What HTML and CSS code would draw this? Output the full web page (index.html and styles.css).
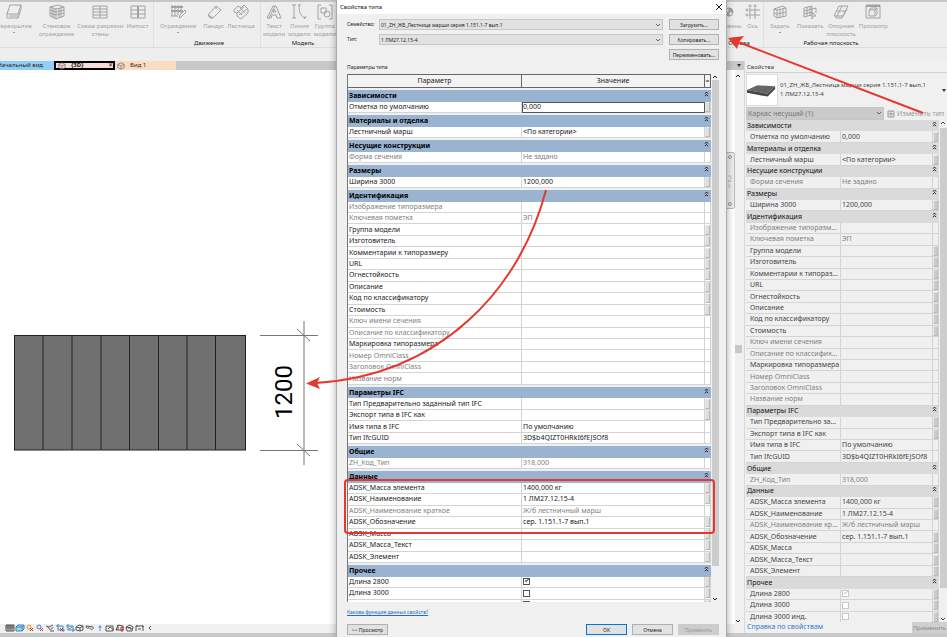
FILE: index.html
```html
<!DOCTYPE html>
<html lang="ru">
<head>
    <meta charset="UTF-8">
    <meta name="viewport" content="width=device-width, initial-scale=1.0">
    <title>Свойства типа</title>
    <link rel="stylesheet" href="styles.css">
</head>
<body>
    <svg class="symbols" aria-hidden="true">
        <symbol id="collapse" viewBox="0 0 5 6"><path d="M1 2.7L2.5 1L4 2.7M1 5.2L2.5 3.5L4 5.2" /></symbol>
        <symbol id="up" viewBox="0 0 6 6"><path d="M1 4L3 2L5 4" /></symbol>
        <symbol id="down" viewBox="0 0 6 6"><path d="M1 2L3 4L5 2" /></symbol>
        <symbol id="cube" viewBox="0 0 10 10"><path d="M1 3L5 1L9 3V7L5 9L1 7ZM1 3L5 5L9 3M5 5V9" /></symbol>
    </svg>

    <div class="app">
        <header class="ribbon">
            <section class="panel build">
                <div class="tools">
                    <button class="tool drop"><svg viewBox="0 0 16 16"><path d="M4 1H15L12 10H1ZM1 10V14H12V10M12 14L15 5V1M3 12H11" /></svg>Перекрытие</button>
                    <button class="tool"><svg viewBox="0 0 16 16"><path d="M1 3L9 1L15 3V12L7 15L1 12ZM1 3L7 5L15 3M7 5V15M3 4V13M5 4V14M10 4V14M12 4V13M1 6L7 8L15 6M1 9L7 11L15 9" /></svg>Стеновое<br>ограждение</button>
                    <button class="tool"><svg viewBox="0 0 16 16"><path d="M1 2H15V14H1ZM8 2V14M1 8H15M1 5H15M1 11H15" /></svg>Схема разрезки<br>стены</button>
                    <button class="tool"><svg viewBox="0 0 16 16"><path d="M1 2H15V14H1ZM1 6H15M1 10H15" /><path class="bold" d="M8 2V14" /></svg>Импост</button>
                </div>
            </section>
            <section class="panel motion">
                <div class="tools">
                    <button class="tool drop"><svg viewBox="0 0 16 16"><path class="bold" d="M1 3H13M1 7H13" /><path d="M2 1V12M5 1V12M8 1V11M11 1V9M1 12H8M9 14L10 11L15 6L16 8L11 13Z" /></svg>Ограждение</button>
                    <button class="tool"><svg viewBox="0 0 16 16"><path d="M2 11L10 2L15 6L7 14H4ZM2 11L7 14M10 2V5" /></svg>Пандус</button>
                    <button class="tool"><svg viewBox="0 0 16 16"><path d="M1 6L5 2L8 4L11 1L15 5V9L8 15L4 12V9L1 8ZM4 9L11 3M6 11L14 5M4 6L9 11M7 4L12 9" /></svg>Лестница</button>
                </div>
                <h2>Движение</h2>
            </section>
            <section class="panel model">
                <div class="tools">
                    <button class="tool"><svg viewBox="0 0 16 16"><path d="M1 14L7 2H10L15 14H11L10 11H6L5 14ZM7 8H10L8 5ZM3 14L9 2" /></svg>Текст<br>модели</button>
                    <button class="tool"><svg viewBox="0 0 16 16"><path d="M3 1V14M1 1H5M1 14H5M8 1C8 9 10 13 15 14M7 1H10M13 15L15 12" /></svg>Линия<br>модели</button>
                    <button class="tool"><svg viewBox="0 0 16 16"><path d="M4 1H1V15H4M12 1H15V15H12M4 4H9V9H4Z" /><circle cx="10" cy="10" r="3" /></svg>Группа<br>модели</button>
                </div>
                <h2>Модель</h2>
            </section>
            <section class="panel datum">
                <div class="tools">
                    <button class="tool"><svg viewBox="0 0 16 16"><circle cx="8" cy="8" r="4" /><path class="solid" d="M8 8V4A4 4 0 0 1 12 8ZM8 8V12A4 4 0 0 1 4 8Z" /></svg>Уровень</button>
                    <button class="tool"><svg viewBox="0 0 16 16"><path d="M5 4V15M10 4V15M4 6H15M4 11H15" /><circle cx="5" cy="2" r="1" /><circle cx="10" cy="2" r="1" /><circle cx="2" cy="6" r="1" /><circle cx="2" cy="11" r="1" /></svg>Ось</button>
                </div>
                <h2>Основа</h2>
            </section>
            <section class="panel plane">
                <div class="tools">
                    <button class="tool drop"><svg viewBox="0 0 16 16"><path d="M2 5L11 2L14 4V12L5 14L2 12ZM2 5L5 6L14 4M5 6V14M8 5V13M11 5V13M2 9L5 10L14 8" /></svg>Задать</button>
                    <button class="tool"><svg viewBox="0 0 16 16"><path d="M2 4L10 2V11L2 13ZM5 3V12M8 3V12M2 7L14 4V9M2 10L10 8M10 8L14 12L11 12L10 15Z" /></svg>Показать</button>
                    <button class="tool"><svg viewBox="0 0 16 16"><path d="M6 2H15L10 12H1ZM9 2L4 12M4 7H12M3 12V14H9L14 5" /></svg>Опорная<br>плоскость</button>
                    <button class="tool"><svg viewBox="0 0 16 16"><path d="M1 1H15V14H1Z" /><path class="bold" d="M1 2H15" /><path d="M4 6L6 4H12V10L10 12H4ZM4 6H10V12M10 6L12 4" /></svg>Просмотр</button>
                </div>
                <h2>Рабочая плоскость</h2>
            </section>
        </header>

        <main class="workspace">
            <section class="view">
                <nav class="tabs">
                    <a class="tab start" href="#">Начальный вид</a>
                    <a class="tab active" href="#"><svg viewBox="0 0 10 10"><use href="#cube" /></svg>{3D}<span class="close">✕</span></a>
                    <a class="tab level" href="#"><svg viewBox="0 0 10 10"><use href="#cube" /></svg>Вид 1</a>
                </nav>
                <div class="canvas">
                    <svg class="drawing" viewBox="0 0 336 180" role="img" aria-label="Лестничный марш, ширина 1200">
                        <rect x="14" y="25" width="232" height="115" />
                        <path class="steps" d="M14.500 25V140M43 25V140M72 25V140M101 25V140M129.500 25V140M158.500 25V140M187 25V140M215.500 25V140M245.500 25V140M14 25.500H246M14 140H246" />
                        <path class="dim" d="M260 25.500H318M260 140.500H318M304 11V155M297 19L310 31M297 134L310 146" />
                        <text transform="translate(292 109) rotate(-90)">1200</text>
                    </svg>
                </div>
                <div class="view-bar">
                    <svg viewBox="0 0 10 8"><path d="M1 1H9V7H1ZM1 2H9M3 1V7M5 1V7M7 1V7M1 4H9" /></svg>
                    <svg class="blue" viewBox="0 0 10 8"><path class="fill" d="M1 3L3 1H9V5L7 7H1Z" /><path d="M1 3H7V7M7 3L9 1" /></svg>
                    <svg class="sun" viewBox="0 0 10 8"><circle cx="4" cy="3" r="2" /><path class="x" d="M5 4L8 7M8 4L5 7" /></svg>
                    <svg class="blue" viewBox="0 0 10 8"><circle cx="4" cy="3" r="2" /><path class="x" d="M5 4L8 7M8 4L5 7" /></svg>
                    <svg viewBox="0 0 10 8"><path d="M1 2L4 3L8 1M3 3C4 6 7 6 8 3M5 7H9" /></svg>
                    <svg class="blue" viewBox="0 0 10 8"><path d="M3 0V6H10M1 2H8V8" /><path class="x" d="M5 4L8 7M8 4L5 7" /></svg>
                    <svg class="blue" viewBox="0 0 10 8"><path d="M3 0V6H10M1 2H8V8M4 5L7 3" /></svg>
                    <svg viewBox="0 0 10 8"><path d="M1 3L4 1L8 2V6L5 7L1 6ZM1 3L5 4V7M5 4L8 2" /></svg>
                    <svg viewBox="0 0 10 8"><path d="M1 2C1 5 4 5 4 3M5 4C6 7 9 5 8 3M1 2L8 3" /></svg>
                    <svg class="blue" viewBox="0 0 10 8"><circle cx="5" cy="3" r="1" /><path d="M4 6H6" /></svg>
                    <svg viewBox="0 0 10 8"><path d="M1 2H8V7H1ZM3 5L5 3L9 6" /></svg>
                    <svg viewBox="0 0 10 8"><path d="M1 6L3 1L8 2V6ZM3 1V6" /><path class="x" d="M6 3H8V7H6Z" /></svg>
                    <svg viewBox="0 0 10 8"><path d="M1 3L5 1L8 3L7 7H2ZM3 4H6V6M1 3L6 4" /></svg>
                    <svg viewBox="0 0 10 8"><path d="M1 7V2H8V7M1 2H3M7 1L9 3M3 5H6" /></svg>
                    <svg viewBox="0 0 10 8"><path d="M6 2L4 4L6 6" /></svg>
                </div>
            </section>

            <div class="gutter">
                <span class="gutter-menu"></span>
                <svg class="arrow"><use href="#up" /></svg>
                <span class="gutter-thumb"></span>
                <svg class="arrow"><use href="#down" /></svg>
            </div>

            <aside class="palette">
                <h2>Свойства</h2>
                <div class="type">
                    <div class="preview">
                        <svg viewBox="0 0 32 32"><path d="M0 16L11 11L30 12L22 20Z" /><path class="side" d="M0 16L22 20L30 12V15L22 23L0 19Z" /></svg>
                    </div>
                    <p>01_ZH_ЖБ_Лестница марши серия 1.151.1-7 вып.1<br>1 ЛМ27.12.15-4</p>
                    <span class="type-menu"></span>
                </div>
                <div class="filter">
                    <div class="combo">
                        <select aria-label="Категория"><option>Каркас несущий (1)</option></select>
                        <svg class="arrow"><use href="#down" /></svg>
                    </div>
                    <button class="edit-type"><svg viewBox="0 0 8 8"><path d="M1 1H7V7H1ZM4 1V7M1 4H7" /></svg>Изменить тип</button>
                </div>
                <div class="scroller">
                    <table class="params" id="palette-params">
                        <colgroup><col class="name-col"><col><col class="btn-col"></colgroup>
                    </table>
                    <div class="scrollbar">
                        <svg class="arrow"><use href="#up" /></svg>
                        <span class="thumb"></span>
                        <svg class="arrow"><use href="#down" /></svg>
                    </div>
                </div>
                <footer><a href="#">Справка по свойствам</a><button disabled>Применить</button></footer>
            </aside>
        </main>
        <div class="status"></div>
    </div>

    <div class="navbar"><i></i><svg viewBox="0 0 8 40"><path d="M0 10H6V16L3 19H0M0 21H8M0 24L4 32M0 32H5" /></svg><i></i></div>

    <div class="dialog" role="dialog" aria-labelledby="dialog-title">
        <div class="titlebar">
            <h1 id="dialog-title">Свойства типа</h1>
            <button class="dismiss" aria-label="Закрыть"><svg viewBox="0 0 8 8"><path d="M1 1L7 7M7 1L1 7" /></svg></button>
        </div>
        <div class="form">
            <label for="family">Семейство:</label>
            <div class="combo">
                <select id="family"><option>01_ZH_ЖБ_Лестница марши серия 1.151.1-7 вып.1</option></select>
                <svg class="arrow"><use href="#down" /></svg>
            </div>
            <button>Загрузить...</button>
            <label for="type">Тип:</label>
            <div class="combo">
                <select id="type"><option>1 ЛМ27.12.15-4</option></select>
                <svg class="arrow"><use href="#down" /></svg>
            </div>
            <button>Копировать...</button>
            <button class="rename">Переименовать...</button>
        </div>
        <p class="caption">Параметры типа</p>
        <div class="scroller">
            <table class="params" id="dialog-params">
                <colgroup><col class="name-col"><col><col class="btn-col"></colgroup>
                <thead><tr><th>Параметр</th><th>Значение</th><th>=</th></tr></thead>
            </table>
            <div class="scrollbar">
                <svg class="arrow"><use href="#up" /></svg>
                <span class="thumb"></span>
                <svg class="arrow"><use href="#down" /></svg>
            </div>
        </div>
        <a class="help" href="#">Какова функция данных свойств?</a>
        <div class="actions">
            <button class="look">&lt;&lt; Просмотр</button>
            <button class="ok">OK</button>
            <button>Отмена</button>
            <button disabled>Применить</button>
        </div>
    </div>

    <svg class="notes" viewBox="0 0 647 560" aria-hidden="true">
        <path d="M246 190C220 290 140 375 16 383" />
        <path class="head" d="M6 383.500L20 377L17 383L20 389Z" />
        <path d="M623 113L438 42" />
        <path class="head" d="M428 38L444 36L439 42L437 49Z" />
        <rect x="45" y="480" width="369" height="53" rx="3" />
    </svg>

    <script>
        // name, value, flags: r - read only, b - has a button
        const groups = [
            ['Зависимости', [['Отметка по умолчанию', '0,000', 'b']]],
            ['Материалы и отделка', [['Лестничный марш', '<По категории>', 'b']]],
            ['Несущие конструкции', [['Форма сечения', 'Не задано', 'r']]],
            ['Размеры', [['Ширина 3000', '1200,000', 'b']]],
            ['Идентификация', [
                ['Изображение типоразмера', '', 'r'],
                ['Ключевая пометка', 'ЭП', 'r'],
                ['Группа модели', '', 'b'],
                ['Изготовитель', '', 'b'],
                ['Комментарии к типоразмеру', '', 'b'],
                ['URL', '', 'b'],
                ['Огнестойкость', '', 'b'],
                ['Описание', '', 'b'],
                ['Код по классификатору', '', 'b'],
                ['Стоимость', '', 'b'],
                ['Ключ имени сечения', '', 'r'],
                ['Описание по классификатору', '', 'r'],
                ['Маркировка типоразмера', '', ''],
                ['Номер OmniClass', '', 'r'],
                ['Заголовок OmniClass', '', 'r'],
                ['Название норм', '', 'r']
            ]],
            ['Параметры IFC', [
                ['Тип Предварительно заданный тип IFC', '', 'b'],
                ['Экспорт типа в IFC как', '', 'b'],
                ['Имя типа в IFC', 'По умолчанию', ''],
                ['Тип IfcGUID', '3D$b4QIZT0HRkI6fEJSOf8', '']
            ]],
            ['Общие', [['ZH_Код_Тип', '318,000', 'r']]],
            ['Данные', [
                ['ADSK_Масса элемента', '1400,000 кг', 'b'],
                ['ADSK_Наименование', '1 ЛМ27.12.15-4', 'b'],
                ['ADSK_Наименование краткое', 'Ж/б лестничный марш', 'r'],
                ['ADSK_Обозначение', 'сер. 1.151.1-7 вып.1', 'b'],
                ['ADSK_Масса', '', 'b'],
                ['ADSK_Масса_Текст', '', 'b'],
                ['ADSK_Элемент', '', 'b']
            ]],
            ['Прочее', [
                ['Длина 2800', true, 'b'],
                ['Длина 3000', false, 'b'],
                ['Длина 3000 инд.', false, 'b']
            ]]
        ];

        function fillTable(table, inDialog) {
            groups.forEach(([title, rows]) => {
                const body = table.createTBody();
                const head = body.insertRow();
                head.className = 'group';
                head.innerHTML = `<th colspan="3">${title}<svg><use href="#collapse" /></svg></th>`;

                rows.forEach(([name, value, flags]) => {
                    const row = body.insertRow();
                    if (flags === 'r') row.className = 'readonly';
                    row.insertCell().textContent = name;
                    const cell = row.insertCell();
                    const last = row.insertCell();

                    if (typeof value === 'boolean') {
                        const box = document.createElement('input');
                        box.type = 'checkbox';
                        box.checked = value;
                        box.disabled = !inDialog;
                        box.setAttribute('aria-label', name);
                        cell.append(box);
                    } else if (inDialog && value === '0,000') {
                        cell.className = 'editing';
                        cell.innerHTML = `<input type="text" value="${value}" aria-label="${name}">`;
                    } else {
                        cell.textContent = value;
                    }
                    if (flags === 'b') last.innerHTML = `<button aria-label="${name}"></button>`;
                });
            });
        }

        fillTable(document.getElementById('palette-params'), false);
        fillTable(document.getElementById('dialog-params'), true);
    </script>
</body>
</html>
```
FILE: styles.css
```css
* {
    box-sizing: border-box;
}

body {
    margin: 0;
    height: 100vh;
    position: relative;
    overflow: hidden;
    font-family: "Noto Sans", sans-serif;
    font-size: 7px;
    line-height: 10px;
    color: #222;
    background: #fff;
}

h1, h2, p {
    margin: 0;
    font-size: 6px;
    font-weight: normal;
}

button, select, input {
    font: inherit;
    color: inherit;
    margin: 0;
    padding: 0;
    border-radius: 0;
}

svg {
    fill: none;
    stroke: currentColor;
}

.symbols {
    position: absolute;
    width: 0;
    height: 0;
}

.arrow {
    width: 6px;
    height: 6px;
    flex: none;
}

.app {
    height: 100%;
    display: flex;
    flex-direction: column;
}

/* Лента */
.ribbon {
    display: flex;
    height: 48px;
    flex: none;
    font-size: 6px;
    background: #eee;
    border-top: 2px solid #c6c6c6;
    border-bottom: 1px solid #dcdcdc;
}

.panel {
    flex: none;
    padding: 2px 2px 0;
    border-right: 1px solid #e0e0e0;
}

.build {
    width: 154px;
}

.build .tools {
    margin-left: -6px;
}

.motion {
    width: 107px;
    padding-left: 6px;
}

.model {
    width: 84px;
    border: 0;
}

.datum {
    width: 49px;
    margin-left: auto;
}

.plane {
    width: 183px;
    padding-left: 6px;
    padding-right: 55px;
    border: 0;
}

.tools {
    display: flex;
    gap: 3px;
    height: 35px;
}

.tool {
    display: block;
    flex: none;
    border: 0;
    background: none;
    color: #a2a2a2;
    line-height: 8px;
    text-align: center;
    white-space: nowrap;
    align-self: flex-start;
}

.tool svg {
    display: block;
    width: 16px;
    height: 16px;
    margin: 0 auto 2px;
}

.tool .bold {
    stroke-width: 2;
}

.tool .solid {
    fill: currentColor;
}

.drop {
    margin-right: 4px;
}

.drop::after {
    content: "";
    display: block;
    width: 0;
    margin: 2px auto 0;
    border: 1px solid transparent;
    border-top-color: #444;
}

.panel h2 {
    line-height: 8px;
    text-align: center;
}

/* Рабочая область */
.workspace {
    flex: 1;
    min-height: 0;
    display: grid;
    grid-template-columns: 1fr 10px 202px;
    padding-top: 13px;
    background: #eee;
}

.view {
    display: flex;
    flex-direction: column;
    min-width: 0;
    background: #fff;
}

.tabs {
    display: flex;
    height: 9px;
    font-size: 6px;
    line-height: 9px;
    background: #c8c8c8;
}

.tab {
    display: flex;
    align-items: center;
    width: 61px;
    color: #222;
    text-decoration: none;
}

.tab svg {
    width: 8px;
    height: 8px;
    margin: 0 5px 0 2px;
    color: #777;
}

.start {
    width: 54px;
    justify-content: flex-end;
    padding-right: 11px;
    background: #93cdf5;
    white-space: nowrap;
}

.active {
    border: 2px solid #000;
    background: #f9dcdc;
    font-weight: bold;
    line-height: 5px;
}

.close {
    margin-left: auto;
    font-weight: normal;
}

.level {
    background: #fadcc3;
}

.canvas {
    flex: 1;
    display: flex;
    align-items: center;
}

.drawing {
    width: 336px;
    height: 180px;
    margin-top: 106px;
    stroke: none;
}

.drawing rect {
    fill: #707070;
}

.drawing .steps {
    stroke: #222;
}

.drawing .dim {
    stroke: #777;
}

.drawing text {
    font-family: Roboto, sans-serif;
    font-size: 24px;
    fill: #000;
}

.view-bar {
    display: flex;
    height: 9px;
    padding-left: 5px;
    background: #f0f0f0;
    color: #555;
}

.view-bar svg {
    width: 10px;
    height: 8px;
}

.view-bar .blue {
    color: #3b86bd;
}

.view-bar .sun {
    color: #e0a020;
}

.view-bar .fill {
    fill: #a8d4ef;
}

.view-bar .x {
    stroke: #d03030;
}

.gutter {
    display: flex;
    flex-direction: column;
    justify-content: space-between;
    padding-bottom: 9px;
    border-right: 1px solid #d8d8d8;
    background: #f0f0f0;
}

.gutter-menu {
    height: 9px;
    margin-bottom: -262px;
    background: #c8c8c8;
}

.gutter-menu::after,
.type-menu {
    content: "";
    display: block;
    width: 0;
    border: 2px solid transparent;
    border-top: 3px solid #333;
    border-bottom: 0;
}

.gutter-menu::after {
    margin: 3px 2px;
}

.gutter-thumb {
    width: 7px;
    height: 8px;
    background: #c8c8c8;
}

.status {
    height: 4px;
    flex: none;
    background: #c9c9c9;
}

.navbar {
    position: absolute;
    right: 212px;
    top: 152px;
    width: 10px;
    height: 57px;
    display: flex;
    flex-direction: column;
    justify-content: space-between;
    padding: 2px;
    border: 1px solid #bbb;
    border-radius: 2px;
    background: #ececec;
    color: #999;
}

.navbar i {
    align-self: flex-end;
    width: 4px;
    height: 4px;
    border: 1px solid #999;
    border-radius: 50%;
}

/* Палитра свойств */
.palette {
    display: flex;
    flex-direction: column;
    min-width: 0;
    min-height: 0;
    padding-left: 1px;
    background: #f0f0f0;
    color: #444;
}

.palette h2 {
    height: 12px;
    line-height: 12px;
    padding-left: 1px;
    border-bottom: 1px solid #d0d0d0;
}

.type {
    display: flex;
    align-items: center;
    height: 34px;
    line-height: 9px;
    white-space: nowrap;
}

.preview {
    flex: none;
    width: 32px;
    height: 32px;
    margin-right: 2px;
    border: 1px solid #ddd;
    background: #fff;
}

.preview svg {
    display: block;
    fill: #666;
    stroke: none;
}

.preview .side {
    fill: #444;
}

.type-menu {
    margin-left: auto;
    margin-right: 1px;
}

.filter {
    display: flex;
    height: 13px;
    color: #777;
}

.combo {
    position: relative;
    display: flex;
}

.combo select {
    width: 100%;
    appearance: none;
    border: 1px solid #c6c6c6;
    background: #e2e2e2;
}

.combo .arrow {
    position: absolute;
    right: 2px;
    top: 3px;
    color: #666;
}

.filter .combo {
    flex: 1;
}

.filter select {
    padding-left: 1px;
    background: #cacaca;
}

.edit-type {
    display: flex;
    align-items: center;
    gap: 2px;
    width: 63px;
    padding-left: 3px;
    border: 0;
    background: none;
    color: #999;
    white-space: nowrap;
}

.edit-type svg {
    width: 8px;
    height: 8px;
    flex: none;
}

.palette footer {
    display: flex;
    height: 11px;
    justify-content: space-between;
    padding-left: 1px;
}

.palette a {
    color: #2f7bd0;
    text-decoration: none;
}

.palette footer button {
    width: 35px;
    border: 0;
    font-size: 6px;
    background: #cfcfcf;
    color: #888;
}

/* Таблица параметров */
.scroller {
    display: flex;
    flex: 1;
    min-height: 0;
    overflow: hidden;
    align-items: flex-start;
}

.params {
    flex: 1;
    min-width: 0;
    width: 0;
    table-layout: fixed;
    border-spacing: 0;
}

.params tr {
    height: 11px;
}

.params td {
    padding: 0 0 0 1px;
    border-right: 1px solid #d4d4d4;
    border-bottom: 1px solid #d4d4d4;
    overflow: hidden;
    white-space: nowrap;
    text-overflow: ellipsis;
}

.params td:last-child {
    padding: 0;
}

.params th {
    padding: 0 1px;
    text-align: left;
}

.params th svg {
    float: right;
    width: 5px;
    height: 6px;
    margin-right: 1px;
    stroke: #222;
}

.params td button {
    display: block;
    width: 100%;
    height: 10px;
    border: 1px solid #b8b8b8;
    border-left-color: #e8e8e8;
    border-top-color: #e8e8e8;
    background: #dedede;
}

.params .readonly {
    color: #808080;
}

.params input[type="text"] {
    display: block;
    width: 100%;
    height: 10px;
    padding-left: 1px;
    border: 0;
    outline: 0;
    background: none;
}

.params .editing {
    padding: 0;
    border-color: #555;
    box-shadow: inset 1px 1px #555;
}

.params input[type="checkbox"] {
    display: block;
    position: relative;
    width: 7px;
    height: 7px;
    appearance: none;
    border: 1px solid #555;
    background: #fff;
}

.params input:checked::after {
    content: "";
    position: absolute;
    left: 1px;
    top: 0;
    width: 3px;
    height: 1px;
    border: 1px solid #444;
    border-top: 0;
    border-right: 0;
    transform: rotate(-45deg);
}

.params input:disabled,
.params input:disabled::after {
    border-color: #c8c8c8;
}

.btn-col {
    width: 6px;
}

#palette-params {
    height: 503px;
}

#palette-params .name-col {
    width: 95px;
}

#palette-params .group th {
    background: #dadada;
    font-weight: normal;
    color: #111;
}

#palette-params td:first-child {
    padding-left: 4px;
}

#palette-params button {
    background: #ccc;
}

#dialog-params {
    height: 537px;
    background: #fff;
    border-left: 1px solid #777;
}

#dialog-params .name-col {
    width: 174px;
}

#dialog-params thead tr {
    height: 14px;
}

#dialog-params thead th {
    padding: 0;
    border: 1px solid #666;
    border-left: 0;
    background: #f3f3f3;
    font-weight: normal;
    text-align: center;
}

#dialog-params .group {
    height: 13px;
}

#dialog-params .group th {
    border-top: 2px solid #f0f0f0;
    background: #9ab3d0;
    color: #000;
}

.scrollbar {
    display: flex;
    flex-direction: column;
    align-items: center;
    align-self: stretch;
    width: 8px;
}

.thumb {
    width: 7px;
    flex: 1;
    background: #cdcdcd;
}

.dialog .thumb {
    margin-bottom: 30px;
}

.palette .thumb {
    margin: 2px 0 28px;
}

/* Окно свойств типа */
.dialog {
    position: absolute;
    top: 0;
    bottom: 0;
    right: 220px;
    width: 391px;
    display: flex;
    flex-direction: column;
    padding: 0 7px 2px 10px;
    border-left: 1px solid #aaa;
    border-right: 1px solid #aaa;
    background: #f0f0f0;
    box-shadow: 0 0 7px rgba(0, 0, 0, 0.35);
}

.titlebar {
    display: flex;
    justify-content: space-between;
    align-items: center;
    height: 14px;
    margin: 0 -7px 5px -10px;
    padding: 0 3px;
    background: #fff;
}

.dismiss {
    width: 8px;
    height: 8px;
    border: 0;
    background: none;
}

.dismiss svg {
    display: block;
}

.form {
    display: grid;
    grid-template-columns: 32px 1fr 50px;
    grid-auto-rows: 11px;
    row-gap: 4px;
}

.form,
.caption,
.help,
.actions {
    font-size: 5px;
}

.form .combo {
    margin-right: 6px;
}

.form select {
    padding-left: 1px;
}

.form button,
.actions button {
    border: 1px solid #b0b0b0;
    background: #e2e2e2;
    line-height: 8px;
    white-space: nowrap;
}

.rename {
    grid-column: 3;
}

.caption {
    height: 14px;
    padding-top: 2px;
}

.help {
    margin: 5px 0 7px;
    color: #1a6fc9;
    align-self: flex-start;
}

.actions {
    display: flex;
    gap: 5px;
}

.actions button {
    width: 41px;
    height: 11px;
}

.actions .look {
    margin-right: auto;
}

.actions .ok {
    border: 1px solid #0078d7;
}

.actions button:disabled {
    border-color: #ccc;
    background: #ccc;
    color: #999;
}

/* Стрелки и рамка поверх окон */
.notes {
    position: absolute;
    top: 0;
    right: 0;
    width: 647px;
    height: 560px;
    stroke: #e5392d;
    stroke-width: 2;
    pointer-events: none;
}

.notes .head {
    fill: #e5392d;
    stroke: none;
}
```
